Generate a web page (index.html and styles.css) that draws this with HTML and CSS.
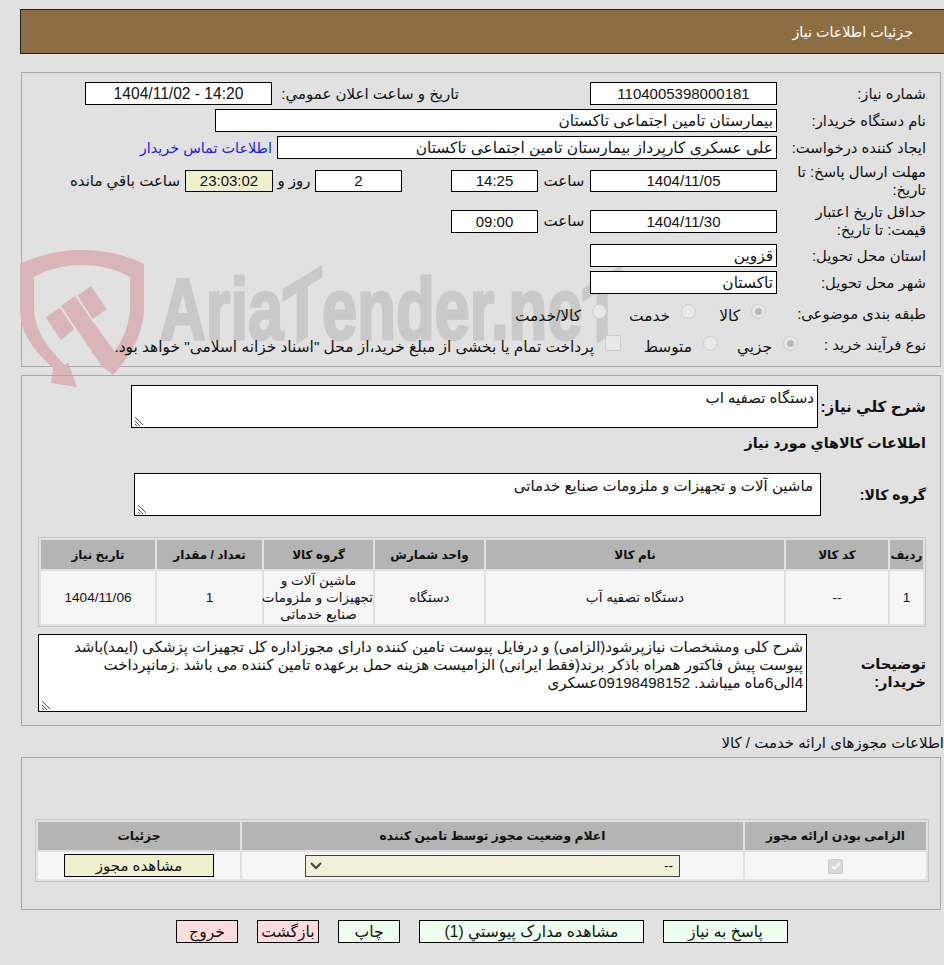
FILE: index.html
```html
<!DOCTYPE html>
<html lang="fa" dir="rtl">
<head>
    <meta charset="UTF-8">
    <title>جزئیات اطلاعات نیاز</title>
    <link rel="stylesheet" href="styles.css">
</head>
<body>
    <div class="header">جزئیات اطلاعات نیاز</div>

    <div class="panel panel-main">
        <div class="watermark" dir="ltr">
            <svg class="wm-shield" viewBox="0 0 124 137" width="124" height="137">
                <path d="M0 14C20 4 41 0 62 0C83 0 104 4 124 14V57C124 85 110 106 93 125L83 117C97 100 110 80 110 57V27C94 18 78 15 62 15C46 15 30 18 14 27V57C14 82 30 100 45 115L48 112L57 137L31 133L33 118C14 100 0 85 0 57Z" fill="#d9b5b7"/>
                <path d="M25.7 67.3L40 57.7L54.3 79.3L40.7 90ZM57.7 45.7L70.7 36L86.7 59L72.7 69ZM41 55.7L55 46L71 69L97 105L83 118L55.3 77.3Z" fill="#d9b5b7"/>
            </svg>
            <span class="wm-text">Aria<span class="wm-t">T</span>ender.ne<span class="wm-t">T</span></span>
        </div>

        <div class="form-grid">
            <div class="row">
                <label class="lbl">شماره نیاز:</label>
                <div class="box box-mid center">1104005398000181</div>
                <label class="lbl-public">تاریخ و ساعت اعلان عمومي:</label>
                <div class="box box-date center" dir="ltr">1404/11/02 - 14:20</div>
            </div>
            <div class="row">
                <label class="lbl">نام دستگاه خریدار:</label>
                <div class="box box-wide">بیمارستان تامین اجتماعی تاکستان</div>
            </div>
            <div class="row">
                <label class="lbl">ایجاد کننده درخواست:</label>
                <div class="box box-creator">علی عسکری کارپرداز بیمارستان تامین اجتماعی تاکستان</div>
                <a href="#" class="contact">اطلاعات تماس خریدار</a>
            </div>
            <div class="row row-tall">
                <label class="lbl">مهلت ارسال پاسخ: تا تاریخ:</label>
                <div class="box box-mid box-short center">1404/11/05</div>
                <span class="word-time">ساعت</span>
                <div class="box box-time box-short center">14:25</div>
                <div class="box box-days box-short center">2</div>
                <span class="word-day">روز و</span>
                <div class="box box-timer box-short center">23:03:02</div>
                <span class="word-left">ساعت باقي مانده</span>
            </div>
            <div class="row row-tall">
                <label class="lbl">حداقل تاریخ اعتبار قیمت: تا تاریخ:</label>
                <div class="box box-mid center">1404/11/30</div>
                <span class="word-time">ساعت</span>
                <div class="box box-time center">09:00</div>
            </div>
            <div class="row row-province">
                <label class="lbl">استان محل تحویل:</label>
                <div class="box box-mid">قزوین</div>
            </div>
            <div class="row">
                <label class="lbl">شهر محل تحویل:</label>
                <div class="box box-mid">تاکستان</div>
            </div>
            <div class="row row-options">
                <label class="lbl">طبقه بندی موضوعی:</label>
                <span class="opt opt-kala"><i class="radio on"></i>کالا</span>
                <span class="opt opt-khedmat"><i class="radio"></i>خدمت</span>
                <span class="opt"><i class="radio"></i>کالا/خدمت</span>
            </div>
            <div class="row row-options">
                <label class="lbl lbl-short">نوع فرآیند خرید :</label>
                <span class="opt opt-jozi"><i class="radio on"></i>جزیي</span>
                <span class="opt opt-motavaset"><i class="radio"></i>متوسط</span>
                <span class="opt"><i class="check"></i>پرداخت تمام یا بخشی از مبلغ خرید،از محل "اسناد خزانه اسلامی" خواهد بود.</span>
            </div>
        </div>
    </div>

    <div class="panel panel-need">
        <div class="need-row">
            <label class="lbl-bold need-lbl">شرح کلي نیاز:</label>
            <div class="area area-need">دستگاه تصفیه اب<svg class="grip" viewBox="0 0 10 10" width="10" height="10"><path d="M1 1L9 9M1 5L6 10M1 8L3 10" stroke="#555" stroke-width="1" fill="none"/></svg></div>
        </div>
        <div class="section-title">اطلاعات کالاهاي مورد نیاز</div>
        <div class="group-row">
            <label class="lbl-bold group-lbl">گروه کالا:</label>
            <div class="area area-group">ماشین آلات و تجهیزات و ملزومات صنایع خدماتی<svg class="grip" viewBox="0 0 10 10" width="10" height="10"><path d="M1 1L9 9M1 5L6 10M1 8L3 10" stroke="#555" stroke-width="1" fill="none"/></svg></div>
        </div>

        <table class="data items">
            <thead>
                <tr>
                    <th class="c-row">ردیف</th>
                    <th class="c-code">کد کالا</th>
                    <th class="c-name">نام کالا</th>
                    <th class="c-unit">واحد شمارش</th>
                    <th class="c-group">گروه کالا</th>
                    <th class="c-qty">تعداد / مقدار</th>
                    <th class="c-date">تاریخ نیاز</th>
                </tr>
            </thead>
            <tbody>
                <tr>
                    <td>1</td>
                    <td>--</td>
                    <td>دستگاه تصفیه آب</td>
                    <td>دستگاه</td>
                    <td class="nowrap">ماشین آلات و<br>تجهیزات و ملزومات<br>صنایع خدماتی</td>
                    <td>1</td>
                    <td>1404/11/06</td>
                </tr>
            </tbody>
        </table>

        <div class="notes-row">
            <label class="lbl-bold notes-lbl">توضیحات<br>خریدار:</label>
            <div class="area area-notes">شرح کلی ومشخصات نیازپرشود(الزامی) و درفایل پیوست تامین کننده دارای مجوزاداره کل تجهیزات پزشکی (ایمد)باشد پیوست پیش فاکتور همراه باذکر برند(فقط ایرانی) الزامیست هزینه حمل برعهده تامین کننده می باشد .زمانپرداخت 4الی6ماه میباشد. 09198498152عسکری<svg class="grip" viewBox="0 0 10 10" width="10" height="10"><path d="M1 1L9 9M1 5L6 10M1 8L3 10" stroke="#555" stroke-width="1" fill="none"/></svg></div>
        </div>
    </div>

    <div class="license-title">اطلاعات مجوزهای ارائه خدمت / کالا</div>
    <div class="panel panel-license">
        <table class="data license">
            <thead>
                <tr>
                    <th class="c-req">الزامی بودن ارائه مجوز</th>
                    <th class="c-status">اعلام وضعیت مجوز توسط تامین کننده</th>
                    <th class="c-detail">جزئیات</th>
                </tr>
            </thead>
            <tbody>
                <tr>
                    <td><span class="check-done"><svg viewBox="0 0 14 14" width="12" height="12"><path d="M2.5 7.5L5.5 10.5L11.5 3.5" stroke="#f4f4f4" stroke-width="2.4" fill="none"/></svg></span></td>
                    <td>
                        <div class="select">
                            <span>--</span>
                            <svg viewBox="0 0 12 8" width="12" height="8"><path d="M1 1L6 6L11 1" stroke="#444" stroke-width="2" fill="none"/></svg>
                        </div>
                    </td>
                    <td><button type="button" class="btn-permit">مشاهده مجوز</button></td>
                </tr>
            </tbody>
        </table>
    </div>

    <div class="actions">
        <button type="button" class="btn btn-green btn-reply">پاسخ به نیاز</button>
        <button type="button" class="btn btn-green btn-docs">مشاهده مدارک پیوستي (1)</button>
        <button type="button" class="btn btn-green btn-small">چاپ</button>
        <button type="button" class="btn btn-red btn-small">بازگشت</button>
        <button type="button" class="btn btn-red btn-small">خروج</button>
    </div>
</body>
</html>
```

FILE: styles.css
```css
body {
    font-family: 'Liberation Sans', 'DejaVu Sans', sans-serif;
    font-size: 15px;
    margin: 0;
    padding: 9px 3px 0 21px;
    color: #111;
    background-color: #e1e1e1;
}

.header {
    height: 43px;
    line-height: 45px;
    background-color: #8d6e43;
    border: 1px solid #222;
    border-right: none;
    color: #fff;
    font-size: 14.3px;
    padding-right: 31px;
    margin: 0 -3px 0 -1px;
}

.panel {
    border: 1px solid #a8a8a8;
    position: relative;
}

.panel-main {
    margin-top: 18px;
    height: 293px;
}

.watermark {
    position: absolute;
    left: -2px;
    top: 177px;
    width: 640px;
    height: 140px;
}

.wm-shield {
    position: absolute;
    left: 0;
    top: 0;
}

.wm-text {
    position: absolute;
    left: 140px;
    top: 8px;
    font-size: 88px;
    font-weight: 700;
    color: #c9c9c9;
    -webkit-text-stroke: 3px #c9c9c9;
    transform: scaleX(0.72);
    transform-origin: left top;
    white-space: nowrap;
}

.wm-t {
    display: inline-block;
    transform: skewY(-24deg);
}

.form-grid {
    position: relative;
    padding-top: 9px;
    display: flex;
    flex-direction: column;
    gap: 4px;
}

.row {
    display: flex;
    align-items: center;
    min-height: 23px;
}

.row-tall {
    min-height: 36px;
}

.row-province {
    margin-top: 1px;
}

.row-options {
    min-height: 26px;
    margin-top: 2px;
}

.row-options + .row-options {
    margin-top: 0;
}

.lbl {
    width: 163px;
    flex: none;
    padding: 0 14px 0 9px;
    box-sizing: border-box;
    font-size: 14.8px;
    line-height: 18px;
}

.lbl-short {
    width: 142px;
    padding-left: 0;
    white-space: nowrap;
}

.box {
    height: 23px;
    line-height: 21px;
    border: 1px solid #000;
    background-color: #fff;
    font-size: 15.4px;
    padding: 0 3px;
    flex: none;
    white-space: nowrap;
    overflow: hidden;
    box-sizing: border-box;
}

.box-short {
    height: 22px;
    line-height: 20px;
}

.center {
    font-size: 15px;
    text-align: center;
}

.box-mid {
    width: 187px;
}

.box-wide {
    width: 562px;
}

.box-creator {
    width: 500px;
}

.box-date {
    width: 187px;
    font-size: 15.6px;
}

.box-time {
    width: 87px;
}

.box-days {
    width: 87px;
    margin-right: 49px;
}

.box-timer {
    width: 88px;
    background-color: #f0f0cf;
}

.lbl-public {
    width: 187px;
    margin-right: 131px;
    flex: none;
    white-space: nowrap;
}

.word-time {
    width: 52px;
    text-align: center;
    flex: none;
}

.word-day {
    width: 42px;
    text-align: center;
    flex: none;
}

.word-left {
    margin-right: 5px;
    white-space: nowrap;
}

.contact {
    color: #1a1aee;
    font-size: 14.4px;
    text-decoration: none;
    margin-right: 5px;
    white-space: nowrap;
}

.opt {
    display: flex;
    align-items: center;
    gap: 11px;
    padding-top: 4px;
    font-size: 15.4px;
    white-space: nowrap;
}

.opt-kala {
    width: 70px;
    margin-right: 11px;
}

.opt-khedmat {
    width: 89px;
}

.opt-jozi {
    width: 80px;
}

.opt-motavaset {
    width: 97px;
}

.radio {
    width: 15px;
    height: 15px;
    margin-bottom: 8px;
    border: 1px solid #cdcdcd;
    border-radius: 50%;
    background-color: #e8e8e8;
    box-sizing: border-box;
    flex: none;
    position: relative;
}

.radio.on::after {
    content: "";
    position: absolute;
    left: 3px;
    top: 3px;
    width: 7px;
    height: 7px;
    border-radius: 50%;
    background-color: #b8b8b8;
}

.check {
    width: 16px;
    height: 16px;
    margin-bottom: 8px;
    border: 1px solid #cdcdcd;
    border-radius: 2px;
    background-color: #e8e8e8;
    box-sizing: border-box;
    flex: none;
}

.panel-need {
    margin-top: 8px;
    height: 351px;
    box-sizing: border-box;
    padding-top: 9px;
}

.lbl-bold {
    font-weight: 700;
    font-size: 14.6px;
    flex: none;
    box-sizing: border-box;
    margin-right: 14px;
    white-space: nowrap;
}

.need-row,
.group-row,
.notes-row {
    display: flex;
    align-items: center;
}

.need-lbl {
    width: 108px;
    font-size: 15.2px;
}

.area {
    position: relative;
    background-color: #fff;
    border: 1px solid #000;
    height: 43px;
    padding: 3px;
    box-sizing: border-box;
    line-height: 18px;
    flex: none;
}

.area-need {
    width: 687px;
}

.area-group {
    width: 687px;
    padding-right: 7px;
}

.grip {
    position: absolute;
    left: 2px;
    bottom: 1px;
}

.section-title {
    font-weight: 700;
    font-size: 14.3px;
    padding-right: 14px;
    height: 30px;
    line-height: 30px;
}

.group-row {
    margin-top: 15px;
}

.group-lbl {
    width: 105px;
    font-size: 14px;
}

table.data {
    border-collapse: separate;
    border-spacing: 2px;
    border: 1px solid #c6c6c6;
    table-layout: fixed;
    text-align: center;
}

.data th {
    background-color: #b4b4b4;
    font-size: 12px;
    font-weight: 700;
    height: 29px;
    padding: 0;
}

.data td {
    background-color: #f6f6f6;
    font-size: 13.6px;
    padding: 1px 0;
    line-height: 17px;
}

.data td.nowrap {
    white-space: nowrap;
}

.items {
    width: 888px;
    margin: 21px 14px 0 0;
}

.c-row { width: 33px; }
.c-code { width: 102px; }
.c-name { width: 298px; }
.c-unit { width: 109px; }
.c-group { width: 109px; }
.c-qty { width: 105px; }
.c-date { width: 114px; }

.notes-row {
    margin-top: 7px;
}

.notes-lbl {
    width: 119px;
    line-height: 18px;
}

.area-notes {
    width: 769px;
    height: 78px;
    padding: 3px 3px 0;
}

.license-title {
    margin-right: -3px;
    padding-top: 8px;
    height: 31px;
    box-sizing: border-box;
    line-height: 18px;
    white-space: nowrap;
}

.panel-license {
    height: 153px;
    box-sizing: border-box;
    padding-top: 61px;
}

.license {
    width: 894px;
    margin: 0 11px 0 0;
}

.license th {
    height: 28px;
    font-size: 12.3px;
}

.license td {
    height: 25px;
}

.c-req { width: 181px; }
.c-status { width: 501px; }
.c-detail { width: 202px; }

.check-done {
    display: inline-flex;
    align-items: center;
    justify-content: center;
    width: 15px;
    height: 15px;
    background-color: #d8d8d8;
    border: 1px solid #ccc;
    border-radius: 2px;
    box-sizing: border-box;
    vertical-align: middle;
}

.select {
    display: flex;
    justify-content: space-between;
    align-items: center;
    width: 375px;
    height: 22px;
    margin: 0 auto;
    padding: 0 6px 0 4px;
    box-sizing: border-box;
    background-color: #f0f0da;
    border: 1px solid #444;
}

.btn-permit {
    font-family: inherit;
    font-size: 15px;
    width: 150px;
    height: 23px;
    padding: 0;
    background-color: #f0f0cf;
    border: 1px solid #000;
    color: #111;
    vertical-align: middle;
}

.actions {
    display: flex;
    gap: 19px;
    margin-top: 10px;
    padding-right: 153px;
}

.btn {
    font-family: inherit;
    font-size: 15.6px;
    height: 23px;
    padding: 0;
    border: 1px solid #000;
    color: #111;
}

.btn-green {
    background-color: #eeffee;
}

.btn-red {
    background-color: #ffdddd;
}

.btn-reply { width: 125px; }
.btn-docs { width: 225px; }
.btn-small { width: 62px; }
```
